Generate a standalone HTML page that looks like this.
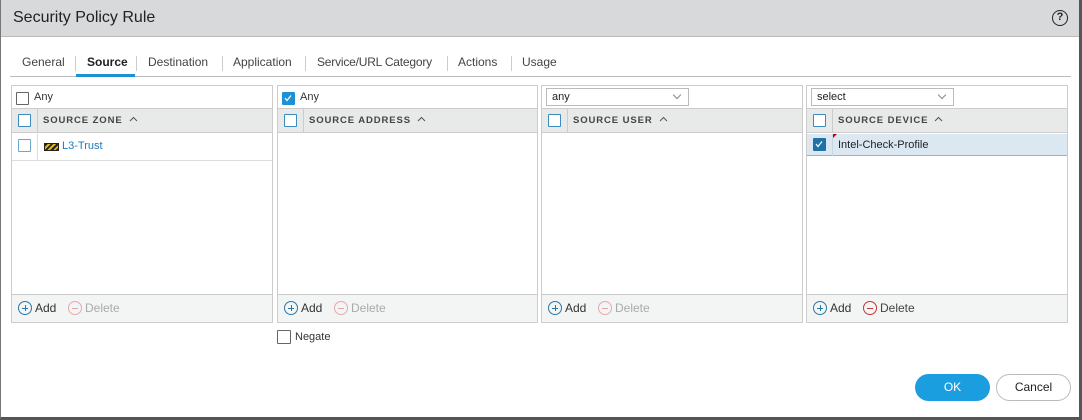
<!DOCTYPE html>
<html><head><style>
*{box-sizing:border-box;margin:0;padding:0}
body{width:1082px;height:420px;background:#fff;font-family:"Liberation Sans",sans-serif;position:relative;overflow:hidden;color:#333}
.frame{position:absolute;left:0;top:0;width:1082px;height:420px;border-left:1px solid #777;border-right:3px solid #555;border-bottom:3px solid #555}
.hdr{position:absolute;left:1px;top:0;width:1078px;height:37px;background:#d8d9da;border-bottom:1px solid #bbb}
.title{position:absolute;left:12px;top:9px;font-size:16px;color:#222}
.help{position:absolute;left:1051px;top:10px;width:16px;height:16px;border:1.5px solid #222;border-radius:50%;font-size:11px;font-weight:bold;text-align:center;line-height:13px;color:#222}
.tabs{position:absolute;left:0;top:54px;width:1082px;height:23px;font-size:12px;color:#444}
.tabs .line{position:absolute;left:10px;top:22px;width:1061px;height:1px;background:#bbb}
.tab{position:absolute;top:1px;white-space:nowrap}
.sep{position:absolute;top:2px;width:1px;height:15px;background:#ccc}
.p{position:absolute;top:85px;height:238px;border:1px solid #ccc}
.cb{position:absolute;width:13px;height:13px;border:1.5px solid #3a8bc0;border-radius:1px;background:#fff}
.cbg{border-color:#666}
.chk{background:#1e90d6;border-color:#1e90d6}
.th{position:absolute;left:0;right:0;top:22px;height:25px;background:#e8e9e9;border-top:1px solid #ccc;border-bottom:1px solid #ccc}
.th .d{position:absolute;left:25px;top:0;width:1px;height:23px;background:#ccc}
.th .t{position:absolute;left:31px;top:6px;font-size:9.5px;font-weight:bold;letter-spacing:.9px;color:#444;white-space:nowrap}
.th svg{vertical-align:1px;margin-left:6px}
.ft{position:absolute;left:0;right:0;bottom:0;height:28px;background:#f3f5f5;border-top:1px solid #ccc;font-size:12px}
.add{position:absolute;left:6px;top:6px;color:#333}
.del{position:absolute;left:56px;top:6px;color:#aaa}
.ic{display:inline-block;width:14px;height:14px;border:1px solid #2a78a8;border-radius:50%;vertical-align:-3px;position:relative;margin-right:3px}
.ic:before{content:"";position:absolute;left:3px;top:6px;width:6px;height:1px;background:#2a78a8}
.ic.pl:after{content:"";position:absolute;left:6px;top:3px;width:1px;height:6px;background:#2a78a8}
.ic.r{border-color:#e5a8a8}.ic.r:before{background:#e5a8a8}
.ic.R{border-color:#c33}.ic.R:before{background:#c33}
.sel{position:absolute;left:4px;top:2px;width:143px;height:18px;border:1px solid #bbb;font-size:11px;padding:2px 5px;color:#222}
.sel:after{content:"";position:absolute;right:8px;top:3px;width:5px;height:5px;border-right:1px solid #888;border-bottom:1px solid #888;transform:rotate(45deg)}
.btn{position:absolute;top:374px;height:27px;border-radius:14px;font-size:12px;text-align:center;line-height:27px}
</style></head><body>
<div class="frame"></div>
<div class="hdr"><div class="title">Security Policy Rule</div><div class="help">?</div></div>
<div class="tabs">
<div class="line"></div>
<span class="tab" style="left:22px">General</span><span class="sep" style="left:75px"></span>
<span class="tab" style="left:87px;font-weight:bold;color:#222">Source</span><span class="sep" style="left:136px"></span>
<div style="position:absolute;left:76px;top:20px;width:59px;height:3px;background:#1e90d6"></div>
<span class="tab" style="left:148px">Destination</span><span class="sep" style="left:222px"></span>
<span class="tab" style="left:233px">Application</span><span class="sep" style="left:305px"></span>
<span class="tab" style="left:317px;letter-spacing:-.2px">Service/URL Category</span><span class="sep" style="left:447px"></span>
<span class="tab" style="left:458px">Actions</span><span class="sep" style="left:511px"></span>
<span class="tab" style="left:522px">Usage</span>
</div>

<div class="p" style="left:11px;width:262px">
 <div class="cb cbg" style="left:4px;top:6px"></div><span style="position:absolute;left:22px;top:5px;font-size:11px">Any</span>
 <div class="th"><div class="cb" style="left:6px;top:5px"></div><div class="d"></div><div class="t">SOURCE ZONE<svg width="9" height="6"><path d="M1 5l3.5-3.5L8 5" stroke="#555" fill="none"/></svg></div></div>
 <div style="position:absolute;left:0;right:0;top:48px;height:27px;border-bottom:1px solid #ddd">
  <div class="cb" style="left:6px;top:5px;border-color:#6aa8cf"></div>
  <div style="position:absolute;left:25px;top:0;width:1px;height:27px;background:#ddd"></div>
  <div style="position:absolute;left:32px;top:9px;width:15px;height:8px;background:repeating-linear-gradient(135deg,#222 0 2px,#e6b800 2px 4px);border:1px solid #222"></div>
  <span style="position:absolute;left:50px;top:6px;font-size:11px;color:#1b7bc0">L3-Trust</span>
 </div>
 <div class="ft"><span class="add"><i class="ic pl"></i>Add</span><span class="del"><i class="ic r"></i>Delete</span></div>
</div>

<div class="p" style="left:277px;width:261px">
 <div class="cb chk" style="left:4px;top:6px"><svg width="10" height="10" style="position:absolute;left:0;top:0"><path d="M2 5l2 2.5 4-5" stroke="#fff" stroke-width="1.2" fill="none"/></svg></div><span style="position:absolute;left:22px;top:5px;font-size:11px">Any</span>
 <div class="th"><div class="cb" style="left:6px;top:5px"></div><div class="d"></div><div class="t">SOURCE ADDRESS<svg width="9" height="6"><path d="M1 5l3.5-3.5L8 5" stroke="#555" fill="none"/></svg></div></div>
 <div class="ft"><span class="add"><i class="ic pl"></i>Add</span><span class="del"><i class="ic r"></i>Delete</span></div>
</div>

<div class="p" style="left:541px;width:262px">
 <div class="sel">any</div>
 <div class="th"><div class="cb" style="left:6px;top:5px"></div><div class="d"></div><div class="t">SOURCE USER<svg width="9" height="6"><path d="M1 5l3.5-3.5L8 5" stroke="#555" fill="none"/></svg></div></div>
 <div class="ft"><span class="add"><i class="ic pl"></i>Add</span><span class="del"><i class="ic r"></i>Delete</span></div>
</div>

<div class="p" style="left:806px;width:262px">
 <div class="sel">select</div>
 <div class="th"><div class="cb" style="left:6px;top:5px"></div><div class="d"></div><div class="t">SOURCE DEVICE<svg width="9" height="6"><path d="M1 5l3.5-3.5L8 5" stroke="#555" fill="none"/></svg></div></div>
 <div style="position:absolute;left:0;right:0;top:48px;height:22px;background:#dbe8f1;border-bottom:1px solid #8ab8d8">
  <div class="cb" style="left:6px;top:4px;background:#1f72a8;border-color:#1f72a8"><svg width="10" height="10" style="position:absolute;left:0;top:0"><path d="M2 5l2 2.5 4-5" stroke="#fff" stroke-width="1.2" fill="none"/></svg></div>
  <div style="position:absolute;left:25px;top:0;width:1px;height:22px;background:#c6d6e2"></div>
  <div style="position:absolute;left:26px;top:0;width:0;height:0;border-top:4px solid #c00;border-right:4px solid transparent"></div>
  <span style="position:absolute;left:31px;top:5px;font-size:11px;color:#222">Intel-Check-Profile</span>
 </div>
 <div class="ft"><span class="add"><i class="ic pl"></i>Add</span><span class="del" style="color:#444"><i class="ic R"></i>Delete</span></div>
</div>

<div class="cb cbg" style="left:277px;top:330px;width:14px;height:14px"></div>
<span style="position:absolute;left:295px;top:331px;font-size:11px">Negate</span>

<div class="btn" style="left:915px;width:75px;background:#1a9ee0;color:#fff">OK</div>
<div class="btn" style="left:996px;width:75px;border:1px solid #bbb;color:#222;line-height:25px">Cancel</div>
</body></html>
